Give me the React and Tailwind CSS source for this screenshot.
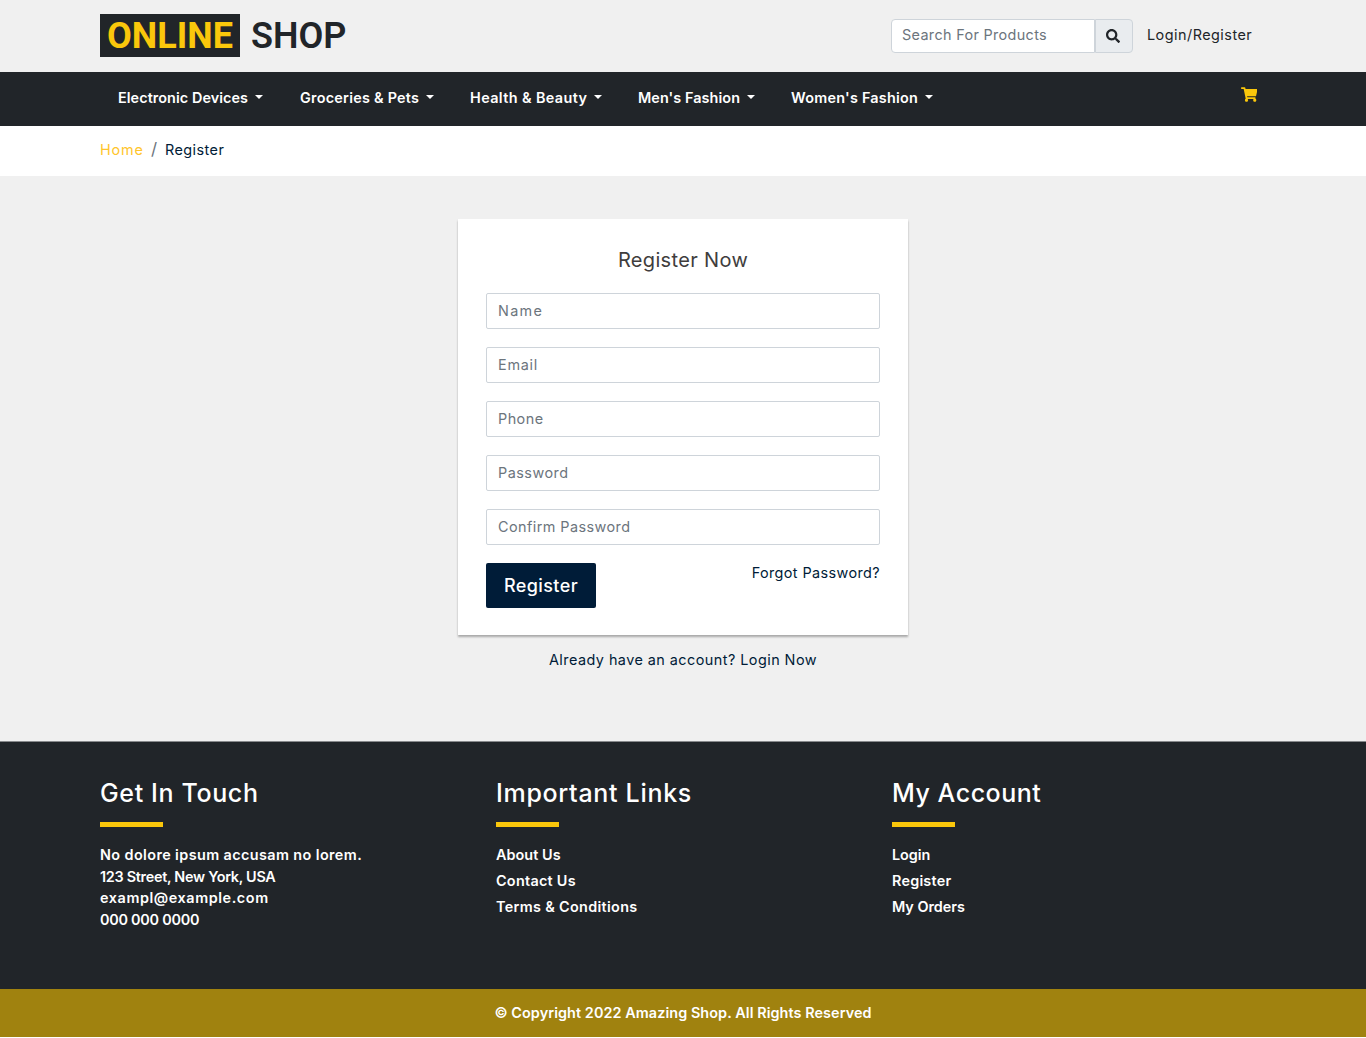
import React from "react";
import { FaSearch, FaShoppingCart } from "react-icons/fa";

const categories = [
  { label: "Electronic Devices", cls: "w-[182px] tracking-[0.07px]" },
  { label: "Groceries & Pets", cls: "w-[170px] tracking-[0.25px]" },
  { label: "Health & Beauty", cls: "w-[168px] tracking-[0.4px]" },
  { label: "Men's Fashion", cls: "w-[153px] tracking-[0.08px]" },
  { label: "Women's Fashion", cls: "tracking-[0.25px]" },
];

const fields = [
  { label: "Name", type: "text", cls: "placeholder:tracking-[1.3px]" },
  { label: "Email", type: "email", cls: "placeholder:tracking-[0.75px]" },
  { label: "Phone", type: "text", cls: "placeholder:tracking-[0.45px]" },
  { label: "Password", type: "password", cls: "placeholder:tracking-[0.48px]" },
  { label: "Confirm Password", type: "password", cls: "placeholder:tracking-[0.44px]" },
];

const importantLinks = [
  { label: "About Us", cls: "tracking-[0.05px]" },
  { label: "Contact Us", cls: "tracking-[0.27px]" },
  { label: "Terms & Conditions", cls: "tracking-[0.33px]" },
];

const accountLinks = [
  { label: "Login", cls: "tracking-[-0.05px]" },
  { label: "Register", cls: "tracking-[0.22px]" },
  { label: "My Orders", cls: "tracking-[-0.03px]" },
];

function Header() {
  return (
    <header className="flex h-[72px] justify-between pl-[100px] pr-[114px]">
      <a className="mt-3.5 flex h-[43px] font-['Roboto',sans-serif] text-[36px] leading-[45px] font-semibold text-[#212529]">
        <span className="w-[140px] bg-[#212529] pl-[7px] font-bold text-[#fac70b]">ONLINE</span>
        <span className="pl-[11px]">SHOP</span>
      </a>
      <div className="mt-[19px] flex h-[34px]">
        <input
          placeholder="Search For Products"
          className="w-[204px] rounded-l border border-[#ced4da] bg-white pl-2.5 pr-3 pb-[3px] text-[14.4px] placeholder:tracking-[0.34px] placeholder:text-[#6c757d]"
        />
        <button className="flex w-[38px] items-center justify-center rounded-r border border-[#ced4da] bg-[#e9ecef] pr-0.5 text-[#212529]">
          <FaSearch size={14} />
        </button>
        <a className="ml-3.5 w-[105px] whitespace-nowrap pt-[5px] leading-[22px] tracking-[0.48px] text-[#212529]">Login/Register</a>
      </div>
    </header>
  );
}

function Navbar() {
  return (
    <nav className="flex h-[54px] bg-[#212529] pl-[118px] pr-[109px] font-semibold text-white">
      {categories.map((c) => (
        <a key={c.label} className={"flex whitespace-nowrap pt-[15px] leading-[22px] " + c.cls}>
          {c.label}
          <span className="ml-[7px] mt-2 h-0 w-0 border-x-[4.3px] border-t-[4.3px] border-x-transparent border-t-white" />
        </a>
      ))}
      <FaShoppingCart className="ml-auto mt-[15px] h-[15px] w-[16.5px] text-[#fac70b]" />
    </nav>
  );
}

function FooterColumn({ title, cls, children }) {
  return (
    <section className="w-[396px]">
      <h2 className={"text-[25px] leading-8 font-medium " + cls}>{title}</h2>
      <div className="mt-[13px] mb-[17px] h-[5px] w-[63px] bg-[#fac70b]" />
      {children}
    </section>
  );
}

function LinkList({ links }) {
  return (
    <ul>
      {links.map((l) => (
        <li key={l.label} className={"h-[26px] leading-[22px] " + l.cls}>{l.label}</li>
      ))}
    </ul>
  );
}

export default function App() {
  return (
    <div className="w-[1366px] bg-[#f0f0f0] font-['Inter',sans-serif] text-[14.4px]">
      <Header />
      <Navbar />
      <div className="flex h-[50px] bg-white pl-[100px] pt-[13px] leading-[22px]">
        <a className="w-[51px] tracking-[0.85px] text-[#ffc52c]">Home</a>
        <span className="w-3.5 text-[17px] leading-[21px] text-[#6c757d]">/</span>
        <span className="tracking-[0.45px] text-[#001c38]">Register</span>
      </div>

      <main className="flex h-[565px] flex-col items-center pt-[43px]">
        <form className="h-[416px] w-[450px] bg-white px-7 pt-[26px] shadow-[0_2px_2px_rgba(0,0,0,0.3)]">
          <h1 className="mb-[18px] h-[30px] text-center text-[20px] leading-[30px] tracking-[0.34px] text-[#403d3d]">Register Now</h1>
          <div className="flex flex-col gap-[18px]">
            {fields.map((f) => (
              <input
                key={f.label}
                type={f.type}
                placeholder={f.label}
                className={"h-9 w-full rounded-[2px] border border-[#ced4da] px-[11px] pb-[2px] text-[14.4px] placeholder:text-[#6c757d] " + f.cls}
              />
            ))}
          </div>
          <div className="mt-[18px] flex items-start justify-between">
            <button type="button" className="h-[44.5px] w-[110px] rounded-[2px] bg-[#001c38] text-[18px] font-medium tracking-[0.4px] text-white">Register</button>
            <a className="whitespace-nowrap leading-[20px] tracking-[0.4px] text-[#001c38]">Forgot Password?</a>
          </div>
        </form>
        <p className="mt-[14px] leading-[22px] tracking-[0.46px] text-[#001c38]">Already have an account? Login Now</p>
      </main>

      <footer className="text-white">
        <div className="flex h-[248px] border-t border-[#888a8c] bg-[#212529] pl-[100px] pt-[35px] font-semibold">
          <FooterColumn title="Get In Touch" cls="tracking-[0.63px]">
            <address className="not-italic leading-[21.6px]">
              <div className="tracking-[0.4px]">No dolore ipsum accusam no lorem.</div>
              <div className="tracking-[-0.28px]">123 Street, New York, USA</div>
              <div className="tracking-[0.58px]">exampl@example.com</div>
              <div className="tracking-[-0.25px]">000 000 0000</div>
            </address>
          </FooterColumn>
          <FooterColumn title="Important Links" cls="tracking-[0.69px]">
            <LinkList links={importantLinks} />
          </FooterColumn>
          <FooterColumn title="My Account" cls="tracking-[0.53px]">
            <LinkList links={accountLinks} />
          </FooterColumn>
        </div>
        <div className="h-12 bg-[#a0820f] pt-[13px] text-center leading-[22px] font-semibold tracking-[0.08px]">
          © Copyright 2022 Amazing Shop. All Rights Reserved
        </div>
      </footer>
    </div>
  );
}
